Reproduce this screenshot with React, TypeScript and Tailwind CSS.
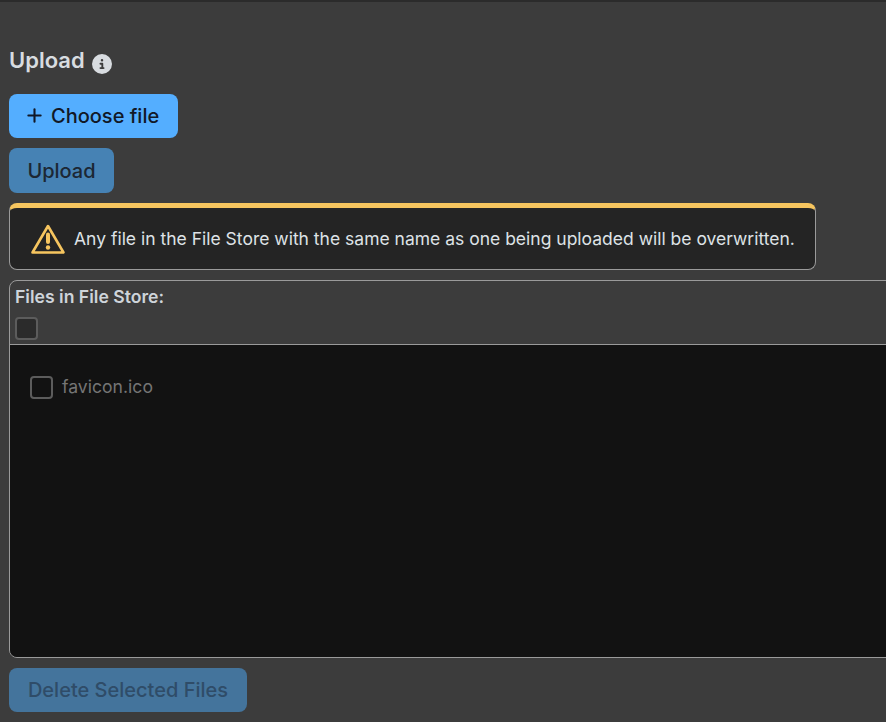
import { Plus } from "lucide-react";
import { FaCircleInfo } from "react-icons/fa6";

export default function App() {
  return (
    <div className="h-[722px] w-[886px] overflow-hidden border-t-2 border-[#2b2b2b] bg-[#3c3c3c] pl-[9px] font-['Inter',sans-serif]">
      {/* Heading */}
      <div className="flex h-[62px] items-end gap-[7px]">
        <h1 className="mb-[-11px] text-[22px] leading-[30px] font-semibold text-[#d8dce0]">Upload</h1>
        <FaCircleInfo className="mb-[-10px] h-[20px] w-[20px] text-[#d8dce0]" />
      </div>

      {/* Buttons */}
      <div className="mt-[30px] flex flex-col items-start gap-[10px]">
        <button className="flex h-[44px] w-[169px] items-center gap-[6px] rounded-lg bg-[#54aeff] pl-[15px] text-[20px] font-medium text-[#111827]">
          <Plus className="mt-[-2px] h-[21px] w-[21px]" strokeWidth={2.4} />
          <span>Choose file</span>
        </button>
        <button className="h-[45px] w-[105px] rounded-lg bg-[#4682b4] text-[20px] font-medium text-[#1c2733]">
          Upload
        </button>
      </div>

      {/* Warning */}
      <div className="mt-[10px] flex h-[67px] w-[807px] items-center gap-[8px] rounded-lg border border-t-[5px] border-[#9a9a9a] border-t-[#f6c55f] bg-[#242424] pl-[20px] pt-[1px]">
        <svg viewBox="0 0 36 32" className="h-[32px] w-[36px] shrink-0" fill="none">
          <path d="M18 3 33.5 29.5h-31z" stroke="#f6c55f" strokeWidth="2.6" strokeLinejoin="round" />
          <path d="M18 11.5v7.5" stroke="#f6c55f" strokeWidth="4" strokeLinecap="round" />
          <circle cx="18" cy="24.5" r="2.2" fill="#f6c55f" />
        </svg>
        <p className="text-[17.5px] text-[#dee2e6]">
          Any file in the File Store with the same name as one being uploaded will be overwritten.
        </p>
      </div>

      {/* File store */}
      <div className="mt-[10px] flex h-[378px] w-[920px] flex-col overflow-hidden rounded-lg border border-[#9a9a9a]">
        <div className="h-[64px] shrink-0 border-b border-[#9a9a9a] pl-[5px] pt-[5px]">
          <div className="text-[17.6px] leading-[21px] font-semibold text-[#ced4da]">Files in File Store:</div>
          <div className="mt-[10px] h-[23px] w-[23px] rounded border-2 border-[#5c5c5c] bg-[#2b2b2b]" />
        </div>
        <div className="flex-1 bg-[#121212] pl-[20px] pt-[30px]">
          <div className="flex items-center gap-[9px]">
            <div className="h-[23px] w-[23px] rounded border-2 border-[#5c5c5c]" />
            <span className="text-[17.6px] leading-[24px] text-[#757575]">favicon.ico</span>
          </div>
        </div>
      </div>

      <button className="mt-[10px] h-[44px] w-[238px] rounded-lg bg-[#44749c] text-[20px] font-medium text-[#2f4c68]">
        Delete Selected Files
      </button>
    </div>
  );
}
